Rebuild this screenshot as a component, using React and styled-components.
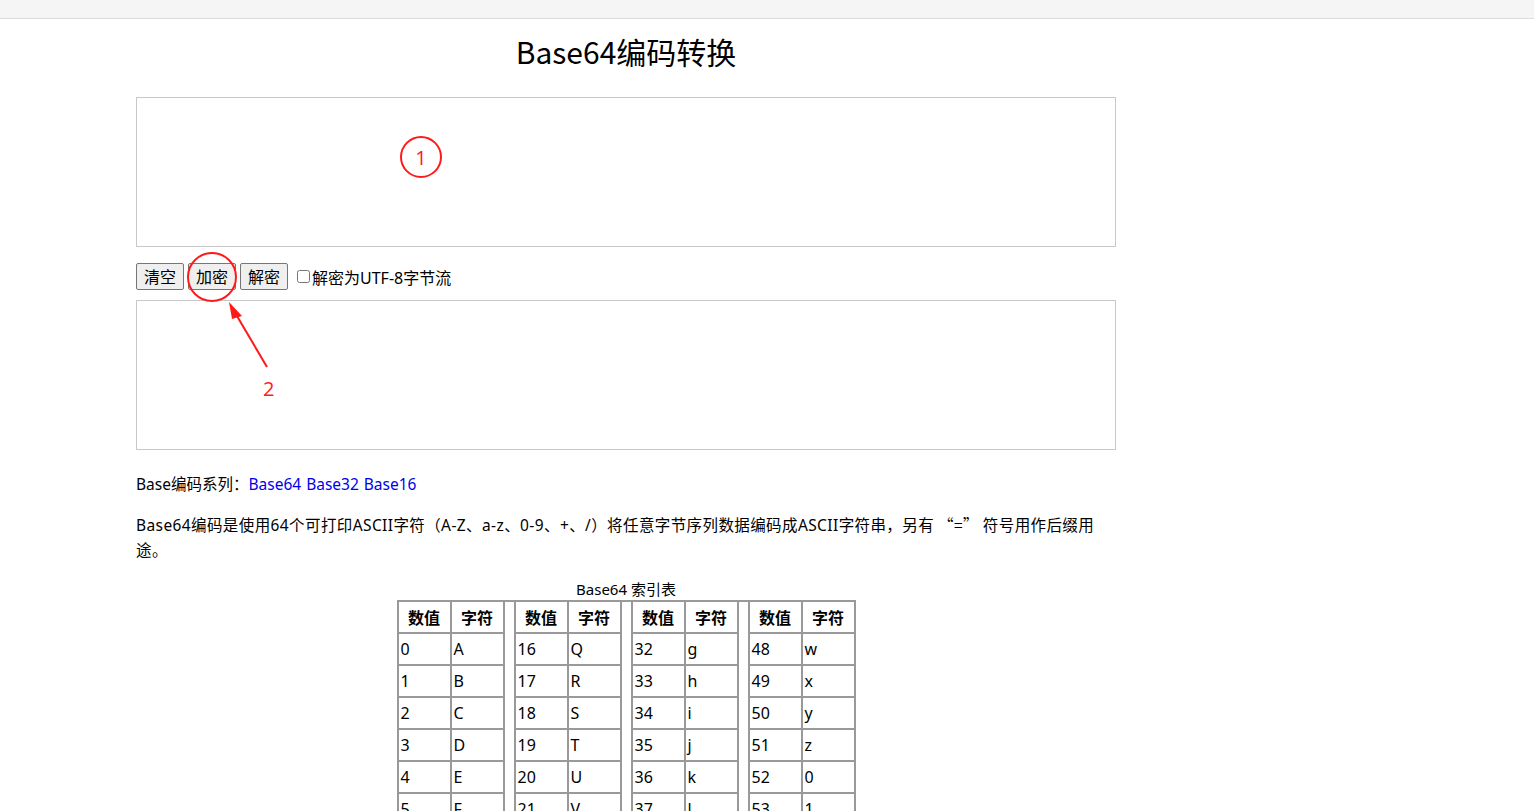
import React from 'react';
import styled, { createGlobalStyle } from 'styled-components';

const GlobalStyle = createGlobalStyle`
  body {
    margin: 0;
    background: #fff;
    color: #000;
    font-family: "Noto Sans", "Noto Sans CJK SC", sans-serif;
  }
`;

const TopBar = styled.div`
  height: 18px;
  background: #f5f5f5;
  border-bottom: 1px solid #dcdcdc;
`;

const Container = styled.div`
  position: relative;
  display: flow-root;
  width: 980px;
  margin-left: 136px;
`;

const Title = styled.h1`
  margin: 12px 0 26px;
  text-align: center;
  font-family: "Noto Sans CJK SC", sans-serif;
  font-size: 30px;
  font-weight: normal;
  line-height: 40px;
`;

const TextBox = styled.textarea`
  display: block;
  box-sizing: border-box;
  width: 980px;
  height: 150px;
  border: 1px solid #c8c8c8;
  resize: none;
  outline: none;
  font-family: inherit;
`;

const Toolbar = styled.div`
  display: flex;
  align-items: center;
  gap: 4px;
  margin: 16px 0 10px;
  font-size: 16px;
`;

const Button = styled.button`
  width: 48px;
  height: 27px;
  padding: 0;
  border: 1px solid #767676;
  border-radius: 2px;
  background: #efefef;
  font-family: "Noto Sans CJK SC", sans-serif;
  font-size: 16px;
  line-height: 25px;
  color: #000;
`;

const CheckLabel = styled.label`
  display: flex;
  align-items: center;
  margin-left: 5px;
  font-size: 16px;
  input {
    width: 13px;
    height: 13px;
    margin: 0 2px 0 0;
  }
`;

const Text = styled.p`
  margin: ${p => p.$top || 0}px 0 0;
  font-size: 15.5px;
  line-height: 25px;
  letter-spacing: ${p => p.$spacing || 0}px;
`;

const Quote = styled.span`
  font-family: "Noto Sans CJK SC", sans-serif;
  margin: 0 4px;
`;

const Link = styled.a`
  color: #0000ee;
  text-decoration: none;
  margin-right: 5px;
`;

const Caption = styled.div`
  margin-top: 15px;
  text-align: center;
  font-size: 15px;
  line-height: 22px;
`;

const Table = styled.table`
  margin: 0 auto;
  border-collapse: collapse;
  font-size: 16px;
  th, td {
    border: 2px solid #999;
    height: 30px;
    padding: 0 2px;
    text-align: left;
    width: 47px;
  }
  th {
    text-align: center;
    font-weight: bold;
  }
`;

const Spacer = styled.td`
  && {
    width: 9px;
    padding: 0;
    border-bottom: none;
  }
`;

const Circle = styled.div`
  position: absolute;
  left: ${p => p.$x - p.$r}px;
  top: ${p => p.$y - p.$r}px;
  width: ${p => p.$r * 2 - 4}px;
  height: ${p => p.$r * 2 - 4}px;
  border: 2px solid #ff1a1a;
  border-radius: 50%;
  display: flex;
  align-items: center;
  justify-content: center;
  color: #ff1a1a;
  font-size: 20px;
  font-family: "Open Sans", sans-serif;
`;

const Mark = styled.div`
  position: absolute;
  left: ${p => p.$x}px;
  top: ${p => p.$y}px;
  color: #ff1a1a;
  font-size: 20px;
  line-height: 24px;
  font-family: "Open Sans", sans-serif;
`;

const Arrow = styled.svg`
  position: absolute;
  left: 86px;
  top: 278px;
  overflow: visible;
`;

const chars = 'ABCDEFGHIJKLMNOPQRSTUVWXYZabcdefghijklmnopqrstuvwxyz0123456789+/';
const rows = Array.from({ length: 16 }, (_, i) => i);
const groups = [0, 16, 32, 48];

export default function App() {
  return (
    <>
      <GlobalStyle />
      <TopBar />
      <Container>
        <Title>Base64编码转换</Title>
        <TextBox />
        <Toolbar>
          <Button>清空</Button>
          <Button>加密</Button>
          <Button>解密</Button>
          <CheckLabel>
            <input type="checkbox" />解密为UTF-8字节流
          </CheckLabel>
        </Toolbar>
        <TextBox />
        <Text $top={22}>
          Base编码系列：<Link href="#">Base64</Link>
          <Link href="#">Base32</Link>
          <Link href="#">Base16</Link>
        </Text>
        <Text $top={15} $spacing={0.4}>
          Base64编码是使用64个可打印ASCII字符（A-Z、a-z、0-9、+、/）将任意字节序列数据编码成ASCII字符串，另有<Quote>“=”</Quote>符号用作后缀用途。
        </Text>
        <Caption>Base64 索引表</Caption>
        <Table>
          <tbody>
            <tr>
              {groups.map((g, gi) => (
                <React.Fragment key={g}>
                  {gi > 0 && <Spacer rowSpan={17} />}
                  <th>数值</th>
                  <th>字符</th>
                </React.Fragment>
              ))}
            </tr>
            {rows.map(i => (
              <tr key={i}>
                {groups.map(g => (
                  <React.Fragment key={g}>
                    <td>{g + i}</td>
                    <td>{chars[g + i]}</td>
                  </React.Fragment>
                ))}
              </tr>
            ))}
          </tbody>
        </Table>

        <Circle $x={285} $y={138} $r={21}>1</Circle>
        <Circle $x={76} $y={258} $r={25} />
        <Arrow width="60" height="80">
          <line x1="45" y1="70" x2="12" y2="14" stroke="#ff1a1a" strokeWidth="2" />
          <polygon points="7,5 20,19 10,22" fill="#ff1a1a" />
        </Arrow>
        <Mark $x={127} $y={358}>2</Mark>
      </Container>
    </>
  );
}
